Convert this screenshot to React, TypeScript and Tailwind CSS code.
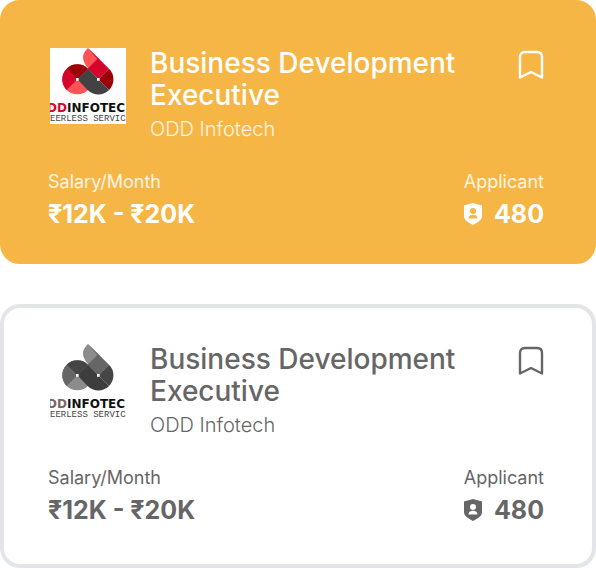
import React from "react";

type Tone = "amber" | "plain";

function Logo({ tone }: { tone: Tone }) {
  const c =
    tone === "amber"
      ? { bright: "#ff5356", mid: "#d4042c", deep: "#9b0008", coal: "#424242", odd: "#d4042c" }
      : { bright: "#8c8c8c", mid: "#666666", deep: "#454545", coal: "#3d3d3d", odd: "#7c6468" };
  return (
    <svg viewBox="0 0 76 76" className="size-[76px] shrink-0" role="img" aria-label="ODD Infotech logo">
      <rect width="76" height="76" fill="#fff" />
      <g transform="scale(.3333) translate(-30 -24)">
        <circle cx="112" cy="118" r="45" fill={c.bright} />
        <path d="M112 118L80 86A45 45 0 0 0 80 150Z" fill={c.mid} />
        <path d="M112 118L80 86A45 45 0 0 1 144 86Z" fill={c.deep} />
        <path d="M144 24C129 38 127 50 131 63C134 73 140 80 150 90L180 60Z" fill={c.bright} />
        <path d="M144 24L207 86L175 118L143 86L172 57Z" fill={c.mid} />
        <path d="M175 118L207 86A45 45 0 0 1 207 150Z" fill={c.deep} />
        <path d="M112 118L144 86L207 150A45 45 0 0 1 143 150Z" fill={c.coal} />
        <path d="M108 114h8v8h-8zM171 114h8v8h-8z" fill="#fff" />
      </g>
      <text x="17" y="64" fontSize="12" fontWeight="700" fontFamily="DejaVu Sans, sans-serif" fill="#111">INFOTEC</text>
      <text x="17" y="64" textAnchor="end" fontSize="12" fontWeight="700" fontFamily="DejaVu Sans, sans-serif" fill={c.odd}>DD</text>
      <text x="0" y="73" fontSize="9" fontFamily="Liberation Mono, monospace" fill="#444">EERLESS SERVIC</text>
    </svg>
  );
}

function JobCard({ tone }: { tone: Tone }) {
  const amber = tone === "amber";
  const soft = amber ? "text-white/85" : "";
  return (
    <article
      className={`rounded-[20px] border-4 pr-12 pl-11 ${
        amber
          ? "border-[#f6b645] bg-[#f6b645] pt-10 pb-[30px] text-white"
          : "border-[#e4e5e9] bg-white pt-8 pb-[38px] text-[#666666]"
      }`}
    >
      <div className="flex items-start">
        <div className="pt-1 pl-[2px]">
          <Logo tone={tone} />
        </div>
        <div className="ml-6 min-w-0 flex-1 pt-[3px]">
          <h2 className="max-w-[320px] text-[28px] leading-8 font-medium">Business Development Executive</h2>
          <p className={`mt-[6px] text-[20px] leading-6 font-light ${soft}`}>ODD Infotech</p>
        </div>
        <button type="button" aria-label="Save job" className="mt-1">
          <svg viewBox="0 0 26 32" className="h-8 w-[26px]" fill="none" stroke="currentColor" strokeWidth="2.4" strokeLinejoin="round">
            <path d="M2 9Q2 4 7 4H19Q24 4 24 9V29.500L13 24L2 29.500Z" />
          </svg>
        </button>
      </div>
      <dl className="mt-[29px] flex justify-between">
        <div>
          <dt className={`text-[18px] leading-6 ${soft}`}>Salary/Month</dt>
          <dd className="mt-1 text-[25px] leading-8 font-bold">₹12K - ₹20K</dd>
        </div>
        <div>
          <dt className={`text-[18px] leading-6 ${soft}`}>Applicant</dt>
          <dd className="mt-1 flex items-center justify-between text-[25px] leading-8 font-bold">
            <svg viewBox="0 0 18 22" className="h-[22px] w-[18px]" fill="currentColor" aria-hidden="true">
              <path fillRule="evenodd" d="M9 0L18 2.500V13C18 17 14 19.500 9 22C4 19.500 0 17 0 13V2.500ZM9 5a3 3 0 1 0 0 6a3 3 0 1 0 0-6ZM4.500 15.500H13.500C13.500 12.800 11 11.800 9 11.800S4.500 12.800 4.500 15.500Z" />
            </svg>
            480
          </dd>
        </div>
      </dl>
    </article>
  );
}

export default function App() {
  return (
    <main className="flex flex-col gap-10 bg-white font-['Inter','Liberation_Sans',sans-serif]">
      <JobCard tone="amber" />
      <JobCard tone="plain" />
    </main>
  );
}
